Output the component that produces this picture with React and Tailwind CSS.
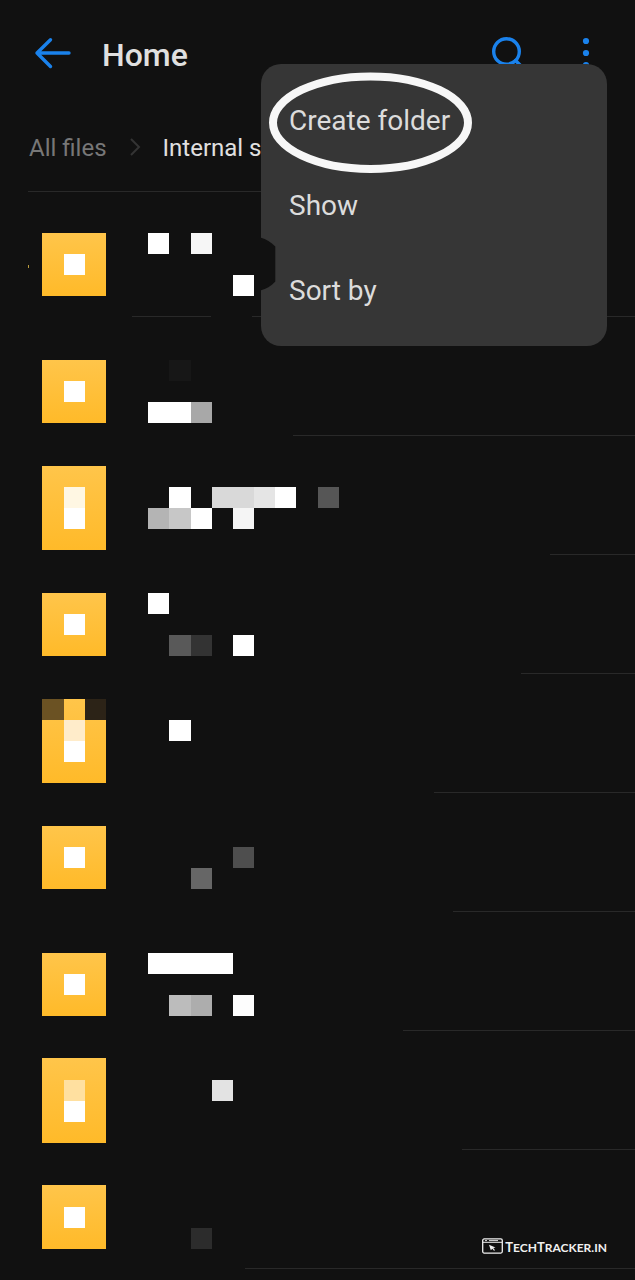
import React from "react";

// The list is pixelated on a mosaic of 30 square tiles across 635 px.
const TILE = 635 / 30;
const at = (n) => Math.round(n * TILE);

// top: y of the row; span: first and last tile row of the folder block.
const rows = [
  {
    top: 192,
    icon: { span: [11, 14], tiles: [[3, 12, "#ffffff"]] },
    name: [[7, 11, "#ffffff"], [9, 11, "#f6f6f6"], [11, 13, "#ffffff"]],
    rule: "ml-[252px]",
  },
  {
    top: 317,
    icon: { span: [17, 20], tiles: [[3, 18, "#ffffff"]] },
    name: [[8, 17, "#171717"], [7, 19, "#ffffff"], [8, 19, "#ffffff"], [9, 19, "#a8a8a8"]],
    rule: "ml-[293px]",
  },
  {
    top: 436,
    icon: { span: [22, 26], tiles: [[3, 23, "#fff7e3"], [3, 24, "#ffffff"]] },
    name: [
      [8, 23, "#ffffff"], [10, 23, "#d9d9d9"], [11, 23, "#d9d9d9"], [12, 23, "#e5e5e5"],
      [13, 23, "#ffffff"], [15, 23, "#565656"], [7, 24, "#b4b4b4"], [8, 24, "#c7c7c7"],
      [9, 24, "#ffffff"], [11, 24, "#f5f5f5"],
    ],
    rule: "ml-[550px]",
  },
  {
    top: 555,
    icon: { span: [28, 31], tiles: [[3, 29, "#ffffff"]] },
    name: [[7, 28, "#ffffff"], [8, 30, "#595959"], [9, 30, "#333333"], [11, 30, "#ffffff"]],
    rule: "ml-[521px]",
  },
  {
    top: 674,
    icon: {
      span: [33, 37],
      tiles: [[2, 33, "#6b5223"], [4, 33, "#2c2317"], [3, 34, "#ffecca"], [3, 35, "#ffffff"]],
    },
    name: [[8, 34, "#ffffff"]],
    rule: "ml-[434px]",
  },
  {
    top: 793,
    icon: { span: [39, 42], tiles: [[3, 40, "#ffffff"]] },
    name: [[11, 40, "#4e4e4e"], [9, 41, "#666666"]],
    rule: "ml-[453px]",
  },
  {
    top: 912,
    icon: { span: [45, 48], tiles: [[3, 46, "#ffffff"]] },
    name: [
      [7, 45, "#ffffff"], [8, 45, "#ffffff"], [9, 45, "#ffffff"], [10, 45, "#ffffff"],
      [8, 47, "#bcbcbc"], [9, 47, "#adadad"], [11, 47, "#fdfdfd"],
    ],
    rule: "ml-[403px]",
  },
  {
    top: 1031,
    icon: { span: [50, 54], tiles: [[3, 51, "#ffe0a0"], [3, 52, "#ffffff"]] },
    name: [[10, 51, "#e3e3e3"]],
    rule: "ml-[462px]",
  },
  {
    top: 1150,
    icon: { span: [56, 59], tiles: [[3, 57, "#ffffff"]] },
    name: [[9, 58, "#2c2c2c"]],
    rule: "ml-[245px]",
  },
];

function Tiles({ tiles, left, top }) {
  return tiles.map(([c, r, fill]) => (
    <rect
      key={c + "-" + r}
      x={at(c) - left}
      y={at(r) - top}
      width={at(c + 1) - at(c)}
      height={at(r + 1) - at(r)}
      fill={fill}
    />
  ));
}

function FileRow({ row, first }) {
  const [from, to] = row.icon.span;
  return (
    <li className="flex flex-col">
      <div className={first ? "flex h-[124px] gap-[42px] pl-[42px]" : "flex h-[118px] gap-[42px] pl-[42px]"}>
        <svg aria-hidden="true" className="h-full w-16 shrink-0 overflow-visible" shapeRendering="crispEdges">
          <rect x="0" y={at(from) - row.top} width="64" height={at(to) - at(from)} fill="url(#folder)" />
          <Tiles tiles={row.icon.tiles} left={42} top={row.top} />
          {first && <rect x="-14" y="73" width="1" height="3" fill="#b89a3c" />}
        </svg>
        <svg aria-hidden="true" className="h-full w-48 shrink-0" shapeRendering="crispEdges">
          <Tiles tiles={row.name} left={148} top={row.top} />
        </svg>
      </div>
      {first ? (
        <div className="flex gap-[41px] pl-[132px]">
          <div className="h-px w-[79px] bg-[#292929]" />
          <div className="h-px flex-1 bg-[#292929]" />
        </div>
      ) : (
        <div className={"h-px bg-[#292929] " + row.rule} />
      )}
    </li>
  );
}

function Menu() {
  return (
    <div role="menu" className="absolute top-16 right-7 w-[346px] rounded-[20px] bg-[#363636] pt-[14px] pb-[13px]">
      {["Create folder", "Show", "Sort by"].map((label) => (
        <button
          key={label}
          role="menuitem"
          type="button"
          className="flex h-[85px] w-full items-center px-7 text-left text-[28px] text-[#dcdcdc]"
        >
          {label}
        </button>
      ))}
      <svg aria-hidden="true" className="pointer-events-none absolute top-2 left-2 h-[102px] w-[204px]" viewBox="0 0 204 102" fill="none">
        <ellipse cx="101.5" cy="50.700" rx="97.5" ry="46.3" stroke="#f7f7f7" strokeWidth="8" />
      </svg>
      <svg aria-hidden="true" className="pointer-events-none absolute top-[173px] left-0 h-[54px] w-[15px]" viewBox="0 0 15 54">
        <path d="M0 0.8C5 2.2 10 5 14.3 9.5V44.5C10 49.500 5 52 0 53.200Z" fill="#111111" />
      </svg>
    </div>
  );
}

export default function App() {
  return (
    <div className="relative min-h-screen overflow-hidden bg-[#111111] font-[Roboto,sans-serif] text-[#e0e0e0]">
      <svg aria-hidden="true" className="absolute h-0 w-0">
        <defs>
          <linearGradient id="folder" x1="0" y1="0" x2="0" y2="1">
            <stop offset="0" stopColor="#ffc54a" />
            <stop offset="1" stopColor="#ffba29" />
          </linearGradient>
        </defs>
      </svg>

      <header className="flex h-[106px] items-center pr-7 pl-[33px]">
        <button type="button" aria-label="Back">
          <svg className="h-10 w-10" viewBox="0 0 40 40" fill="none" stroke="#1a82ec" strokeWidth="3.400" strokeLinecap="round" strokeLinejoin="round">
            <path d="M36 20H4M17.500 6.800L4 20L17.500 33.500" />
          </svg>
        </button>
        <h1 className="ml-[29px] flex-1 pt-1 text-[32px] font-medium">Home</h1>
        <button type="button" aria-label="Search">
          <svg className="h-10 w-10" viewBox="0 0 40 40" fill="none" stroke="#1a82ec" strokeWidth="3.400" strokeLinecap="round">
            <circle cx="19.500" cy="18.500" r="12.800" />
            <path d="M28.500 27.500L34 33" />
          </svg>
        </button>
        <button type="button" aria-label="More options" className="ml-10">
          <svg className="h-10 w-10" viewBox="0 0 40 40" fill="#1a82ec">
            <circle cx="19" cy="8" r="3.100" />
            <circle cx="19" cy="20" r="3.100" />
            <circle cx="19" cy="32" r="3.100" />
          </svg>
        </button>
      </header>

      <nav aria-label="Breadcrumb" className="mx-7 flex h-[86px] items-center border-b border-[#292929] pb-0.5 pl-px text-2xl whitespace-nowrap">
        <a href="#all" className="text-[#777777]">All files</a>
        <svg aria-hidden="true" className="mx-[18px] h-5 w-5" viewBox="0 0 20 20" fill="none" stroke="#343434" strokeWidth="2">
          <path d="M6 1L14 9L6 17" />
        </svg>
        <a href="#internal">Internal storage</a>
      </nav>

      <ul>
        {rows.map((row, i) => (
          <FileRow key={row.top} row={row} first={i === 0} />
        ))}
      </ul>

      <Menu />

      <div className="absolute right-7 bottom-[26px] flex items-end gap-0.5 text-[#f0f0f0]">
        <svg aria-hidden="true" className="h-4 w-[21px]" viewBox="0 0 21 16" fill="none" stroke="currentColor">
          <rect x="0.700" y="0.900" width="19.600" height="14.200" rx="1.500" strokeWidth="1.300" />
          <path d="M1 4.300H20" />
          <path d="M3 2.600H5M7 2.600H16" strokeWidth="0.900" />
          <path d="M7 6.800L13.500 9.500L11.300 10L13 12.200L12 12.800L10.300 10.800L8.800 12.300Z" fill="currentColor" stroke="none" />
        </svg>
        <span className="font-[Lato,sans-serif] text-xs leading-3 font-bold uppercase">
          <span className="text-[13px] leading-3">T</span>ech<span className="text-[13px] leading-3">T</span>racker.in
        </span>
      </div>
    </div>
  );
}
